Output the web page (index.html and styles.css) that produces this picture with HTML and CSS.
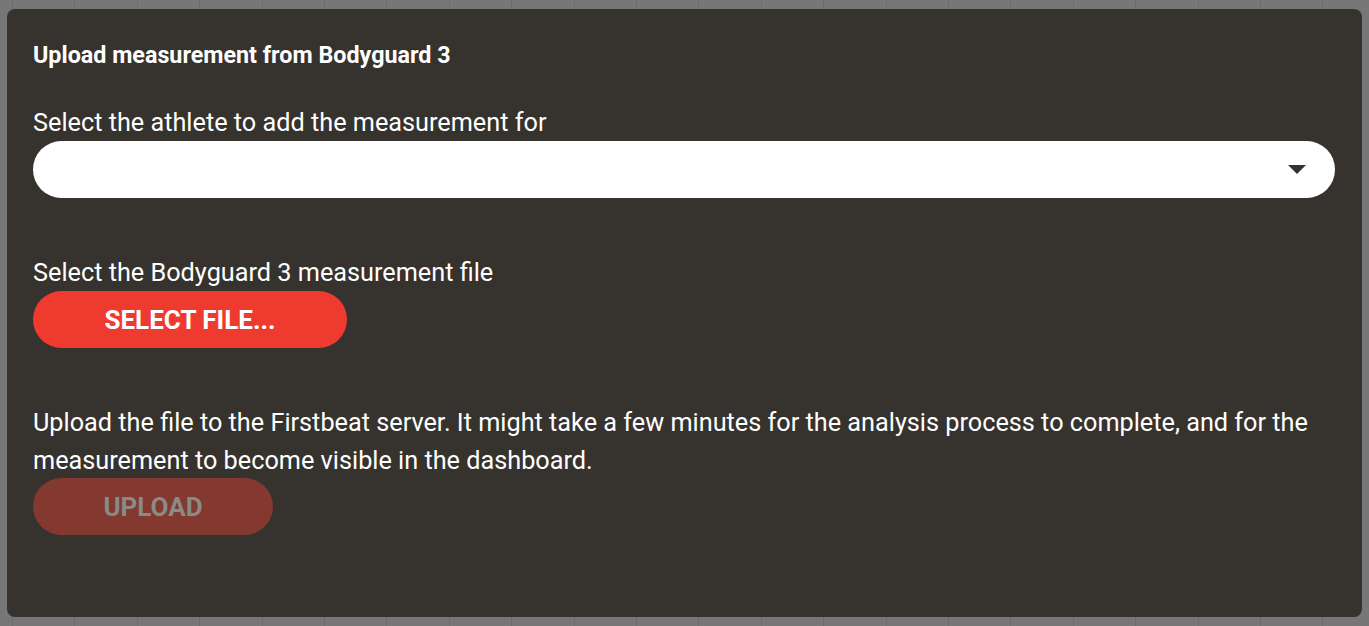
FILE: index.html
```html
<!DOCTYPE html>
<html lang="en">
<head>
  <meta charset="UTF-8">
  <title>Upload measurement</title>
  <link rel="stylesheet" href="styles.css">
</head>
<body>
  <div class="backdrop">
    <div class="dialog">
      <h2 class="dialog-title">Upload measurement from Bodyguard 3</h2>

      <!-- Athlete -->
      <label class="field-label" for="athlete">Select the athlete to add the measurement for</label>
      <div class="select-box" id="athlete">
        <svg class="caret" width="18" height="9" viewBox="0 0 18 9"><path d="M0 0h18L9 9z" fill="#36322e"/></svg>
      </div>

      <!-- File -->
      <div class="field-label second">Select the Bodyguard 3 measurement file</div>
      <button class="pill-btn primary">SELECT FILE...</button>

      <!-- Upload -->
      <p class="upload-text">Upload the file to the Firstbeat server. It might take a few minutes for the analysis process to complete, and for the measurement to become visible in the dashboard.</p>
      <button class="pill-btn disabled" disabled>UPLOAD</button>
    </div>
  </div>
</body>
</html>
```

FILE: styles.css
```css
html, body {
  margin: 0;
  height: 100%;
  overflow: hidden;
}

body {
  font-family: Roboto, "Liberation Sans", Arial, sans-serif;
  background-color: #777777;
  background-image: repeating-linear-gradient(to right, transparent 0, transparent 12px, #6c6c6c 12px, #6c6c6c 13px, transparent 13px, transparent 62.4px);
}

.backdrop {
  padding: 9px 7px 0 7px;
}

.dialog {
  background-color: #36322e;
  border-radius: 8px;
  height: 608px;
  box-sizing: border-box;
  padding: 33px 27px 0 26px;
  color: #ffffff;
}

.dialog-title {
  margin: 0;
  font-size: 23.3px;
  font-weight: 700;
  line-height: 26px;
}

.field-label {
  display: block;
  font-size: 25.25px;
  line-height: 30px;
  margin-top: 40px;
  margin-bottom: 3px;
}

.field-label.second {
  margin-top: 60px;
}

.select-box {
  background-color: #ffffff;
  height: 57px;
  border-radius: 29px;
  display: flex;
  align-items: center;
  justify-content: flex-end;
  padding-right: 29px;
}

.caret {
  display: block;
}

.pill-btn {
  display: block;
  height: 57px;
  border: none;
  border-radius: 29px;
  font-family: inherit;
  font-size: 26px;
  font-weight: 700;
  padding: 0;
}

.primary {
  width: 314px;
  background-color: #ef3b2f;
  color: #ffffff;
}

.disabled {
  width: 240px;
  background-color: #833830;
  color: #8a8a86;
}

.upload-text {
  font-size: 25.25px;
  line-height: 38px;
  margin: 56px 0 -2px 0;
}
```
